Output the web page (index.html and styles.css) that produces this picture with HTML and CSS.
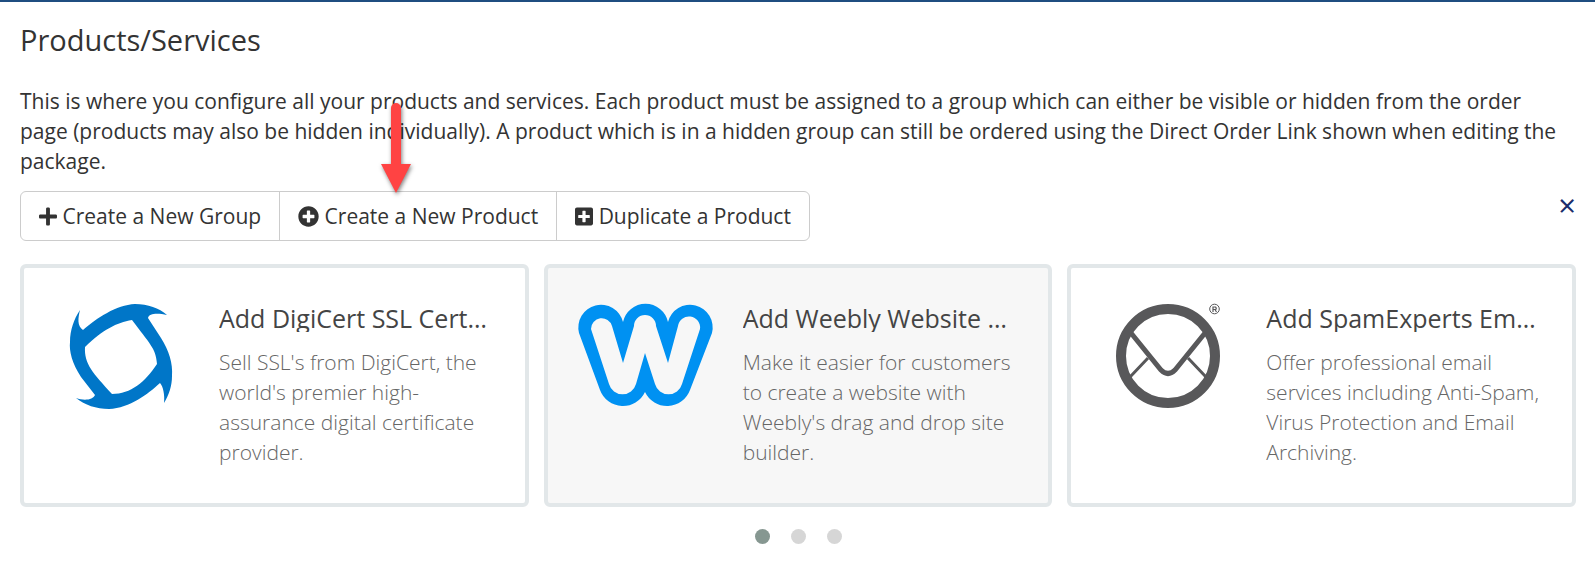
FILE: index.html
```html
<!DOCTYPE html>
<html lang="en">
<head>
<meta charset="utf-8">
<title>Products/Services</title>
<link rel="stylesheet" href="styles.css">
</head>
<body>
<main class="page">
  <h1 class="page-title">Products/Services</h1>
  <p class="intro">This is where you configure all your products and services. Each product must be assigned to a group which can either be visible or hidden from the order page (products may also be hidden individually). A product which is in a hidden group can still be ordered using the Direct Order Link shown when editing the package.</p>

  <div class="toolbar">
    <div class="btn-group">
      <button class="btn" type="button"><svg class="icon icon-narrow" viewBox="0 0 448 512" aria-hidden="true"><path d="M416 208H272V64c0-17.670-14.330-32-32-32h-32c-17.670 0-32 14.330-32 32v144H32c-17.670 0-32 14.330-32 32v32c0 17.670 14.330 32 32 32h144v144c0 17.670 14.330 32 32 32h32c17.670 0 32-14.330 32-32V304h144c17.670 0 32-14.330 32-32v-32c0-17.670-14.330-32-32-32z"/></svg> Create a New Group</button>
      <button class="btn" type="button"><svg class="icon" viewBox="0 0 512 512" aria-hidden="true"><path d="M256 8C119 8 8 119 8 256s111 248 248 248 248-111 248-248S393 8 256 8zm144 276c0 6.600-5.400 12-12 12h-92v92c0 6.600-5.400 12-12 12h-56c-6.600 0-12-5.400-12-12v-92h-92c-6.600 0-12-5.400-12-12v-56c0-6.600 5.400-12 12-12h92v-92c0-6.600 5.400-12 12-12h56c6.600 0 12 5.400 12 12v92h92c6.600 0 12 5.400 12 12v56z"/></svg> Create a New Product</button>
      <button class="btn" type="button"><svg class="icon icon-narrow" viewBox="0 0 448 512" aria-hidden="true"><path d="M400 32H48C21.500 32 0 53.500 0 80v352c0 26.500 21.500 48 48 48h352c26.500 0 48-21.500 48-48V80c0-26.500-21.500-48-48-48zm-32 252c0 6.600-5.400 12-12 12h-92v92c0 6.600-5.400 12-12 12h-56c-6.600 0-12-5.400-12-12v-92H92c-6.600 0-12-5.400-12-12v-56c0-6.600 5.400-12 12-12h92v-92c0-6.600 5.400-12 12-12h56c6.600 0 12 5.400 12 12v92h92c6.600 0 12 5.400 12 12v56z"/></svg> Duplicate a Product</button>
    </div>
    <button class="close" type="button" aria-label="Dismiss">×</button>
    <svg class="pointer" viewBox="0 0 40 100" aria-hidden="true"><path d="M15 10a5 5 0 0 1 10 0v56h10L20 95 5 66h10z"/></svg>
  </div>

  <section class="cards">
    <article class="card">
      <svg class="logo" viewBox="0 0 148 104" aria-hidden="true"><path fill="#0076c8" fill-rule="evenodd" d="M33 6C31 14 30 22 36 26C50 14 69 1 88 0C101 0 112 4 120 11C111 9 102 9 101 14L114 34C122 47 126 59 125 72C125 82 122 91 117 99C118 91 116 82 113 79C101 90 83 104 62 105C49 105 38 101 29 94C37 97 46 96 48 91L34 73C25 59 22 47 23 38C23 26 27 15 33 6ZM85 16C69 19 57 25 38 43C37 60 46 69 65 90C84 90 98 78 110 60C109 44 102 39 85 16Z"/></svg>
      <div class="card-body"><h2 class="card-title">Add DigiCert SSL Certificates</h2>
      <p class="card-text">Sell SSL's from DigiCert, the world's premier high-assurance digital certificate provider.</p></div>
    </article>
    <article class="card card-active">
      <svg class="logo" viewBox="0 0 148 104" aria-hidden="true"><path fill="#0091f2" fill-rule="evenodd" d="M8 29A22.500 22.500 0 0 1 52 18A23 23 0 0 1 97 18A22.500 22.500 0 0 1 141 29L119 86A24.400 24.400 0 0 1 74 88A24.400 24.400 0 0 1 29 86ZM20 25L38 80A14 14 0 0 0 65 80L74 49L84 80A14 14 0 0 0 111 80L129 25A10.700 10.700 0 0 0 107 22L97 59L85 22A11 11 0 0 0 63 22L52 59L41 22A10.700 10.700 0 0 0 20 25Z"/></svg>
      <div class="card-body"><h2 class="card-title">Add Weebly Website Builder</h2>
      <p class="card-text">Make it easier for customers to create a website with Weebly's drag and drop site builder.</p></div>
    </article>
    <article class="card">
      <svg class="logo" viewBox="0 0 148 104" aria-hidden="true"><g fill="none" stroke="#58585a"><circle cx="74" cy="52" r="47" stroke-width="10"/><path stroke-width="5" d="M37 29L67 66Q74 73 81 66L111 29"/><path stroke-width="3" d="M36 73L54 54M112 73L94 54"/><circle cx="120.500" cy="5" r="4.800" stroke-width="1"/><path stroke-width="1.200" d="M119 8V3h2.500q1.500 1.500 0 2.500h-2M121 5.500l1.500 2.500"/></g></svg>
      <div class="card-body"><h2 class="card-title">Add SpamExperts Email Services</h2>
      <p class="card-text">Offer professional email services including Anti-Spam, Virus Protection and Email Archiving.</p></div>
    </article>
  </section>

  <nav class="dots" aria-label="Slides">
    <button class="dot dot-current" type="button" aria-label="Slide 1"></button>
    <button class="dot" type="button" aria-label="Slide 2"></button>
    <button class="dot" type="button" aria-label="Slide 3"></button>
  </nav>
</main>
</body>
</html>
```
FILE: styles.css
```css
* { box-sizing: border-box; }
body {
  margin: 0;
  background: #fff;
  color: #333;
  font: 21px/30px "Open Sans", "Noto Sans", sans-serif;
}
.page { border-top: 2px solid #1f4e80; padding: 18px 19px 18px 20px; }
.page-title { margin: 0 0 26px; font-size: 29px; line-height: 40px; font-weight: 400; }
.intro { margin: 0 0 15px; padding-right: 16px; }
.toolbar { position: relative; display: flex; justify-content: space-between; margin-bottom: 23px; }
.btn-group { display: flex; border: 1px solid #ccc; border-radius: 6px; }
.btn {
  padding: 9px 18px;
  border: 0;
  background: transparent;
  color: inherit;
  font: inherit;
  white-space: nowrap;
}
.btn + .btn { border-left: 1px solid #ccc; }
.icon { width: 21px; height: 21px; vertical-align: -3px; fill: currentColor; }
.icon-narrow { width: 18px; }
.close {
  align-self: flex-start;
  padding: 0;
  border: 0;
  background: transparent;
  color: #1a2c6b;
  font: 31px/28px "Open Sans", sans-serif;
}
.pointer {
  position: absolute;
  left: 356px;
  bottom: 43px;
  width: 40px;
  height: 100px;
  fill: #ff4343;
  filter: drop-shadow(1px 2px 2px rgba(0, 0, 0, 0.5));
  pointer-events: none;
}
.cards { display: grid; grid-template-columns: repeat(3, minmax(0, 1fr)); gap: 15px; }
.card {
  display: flex;
  gap: 24px;
  padding: 36px 32px 36px 23px;
  border: 4px solid #e2e7e9;
  border-radius: 6px;
}
.card-active { background: #f7f7f7; }
.logo { flex: none; width: 148px; height: 104px; overflow: visible; }
.card-body { flex: 1; min-width: 0; }
.card-title {
  margin: 0 0 15px;
  overflow: hidden;
  color: #444;
  font-size: 25px;
  line-height: 28px;
  font-weight: 400;
  white-space: nowrap;
  text-overflow: ellipsis;
}
.card-text { margin: 0; color: #666; font-weight: 300; }
.dots { display: flex; justify-content: center; gap: 21px; margin-top: 22px; }
.dot { width: 15px; height: 15px; padding: 0; border: 0; border-radius: 50%; background: #d6d6d6; }
.dot-current { background: #869791; }
```
